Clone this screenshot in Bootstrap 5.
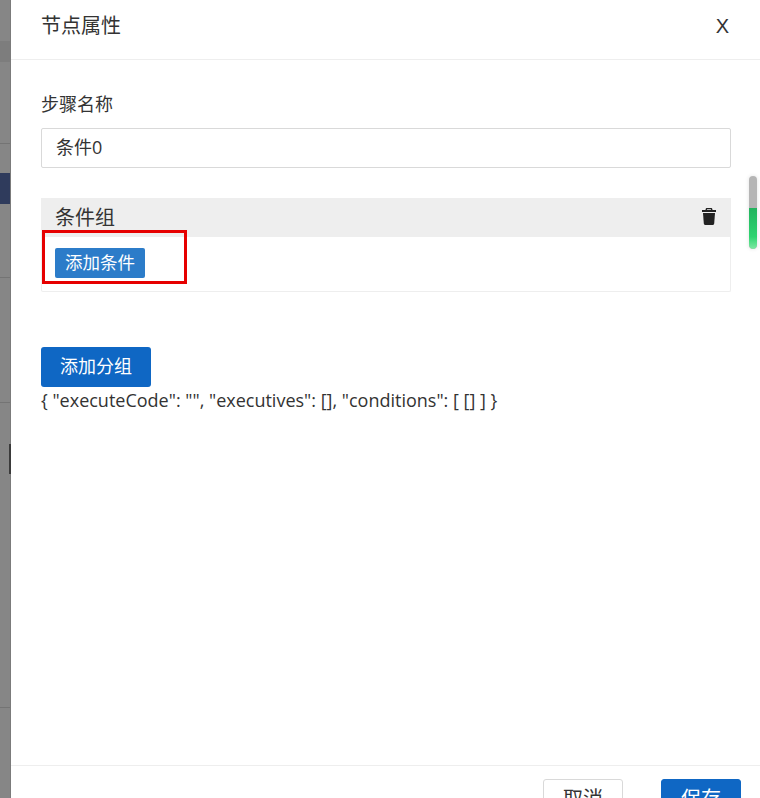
<!DOCTYPE html>
<html lang="zh">
<head>
<meta charset="utf-8">
<title>节点属性</title>
<link href="https://cdn.jsdelivr.net/npm/bootstrap@5.3.0/dist/css/bootstrap.min.css" rel="stylesheet">
<style>
html,body{height:798px;overflow:hidden;background:#fff}
body{font-family:"Open Sans","Noto Sans CJK SC",sans-serif;font-size:18px;color:#333}
.dim-strip{width:11px;flex:none;height:798px;background:#868686;border-right:1px solid #7b7b7b}
.dim-band{height:21px;margin-top:41px;background:#7d7d7d}
.dim-line{height:1px;background:#747474}
.dim-navy{height:31px;background:#2f3b5c}
.dim-edge{position:absolute;right:-1px;top:444px;width:2px;height:30px;background:#3a3a3a}
.panel-main{flex:1 1 auto;min-width:0;height:798px;position:relative}
.panel-head{flex:none;height:60px;padding:0 30px 8px;border-bottom:1px solid #eee}
.panel-title{font-size:20px;line-height:1;color:#333;margin:0;font-weight:400}
.panel-close{font-size:20px;line-height:1;color:#333;padding:0;background:none;border:0;margin-right:1px;font-family:"Liberation Sans",sans-serif}
.panel-body{flex:none;height:705px;padding:33px 29px 0 30px}
.step-label{font-size:18px;line-height:22px;margin:0 0 13px;color:#333;display:block}
.step-input{height:40px;border-radius:2px;border:1px solid #d9d9d9;padding:0 14px 5px;font-size:18px;color:#333}
.group-box{margin-top:30px;border:1px solid #eee;border-top:0;border-radius:2px;height:94px;position:relative}
.group-top{height:39px;background:#eee;padding:0 15px 0 14px;margin:0 -1px}
.group-name{font-size:20px;line-height:1}
.mark-box{position:absolute;left:0;top:32px;width:145px;height:54px;border:3px solid #e60000;pointer-events:none}
.btn-cond{background:#2c7cc9;border:0;color:#fff;width:90px;height:30px;margin:11px 0 0 13px;padding:0 0 2px;font-size:17.5px;line-height:28px;border-radius:2px}
.btn-group-add{background:#0f67c4;border:0;color:#fff;width:110px;height:40px;margin-top:55px;padding:0 0 2px;font-size:18px;border-radius:3px;display:block}
.json-text{font-size:18px;line-height:26px;margin:0;color:#333}
.panel-foot{flex:none;border-top:1px solid #eee;padding:13px 19px 0 0;gap:38px}
.btn-cancel,.btn-save{flex:none;width:80px;height:40px;padding:0;font-size:20px;border-radius:3px}
.btn-cancel{background:#fff;border:1px solid #d9d9d9;color:#333}
.btn-save{background:#0f67c4;border:1px solid #0f67c4;color:#fff}
.trash-svg{width:14px;height:17px;fill:#222;display:block;margin-top:-2px}
.scroll-pill{position:absolute;left:738px;top:176px;width:8px;height:73px;border-radius:4px;overflow:hidden;background:#b5b5b5;box-shadow:0 0 4px rgba(0,0,0,.12)}
.scroll-fill{height:41px;margin-top:32px;background:linear-gradient(#22b35e,#2fd470 70%,#7fe8a3);border-radius:0 0 4px 4px}
</style>
</head>
<body class="d-flex">
<div class="dim-strip position-relative">
  <div class="dim-band"></div>
  <div class="dim-line" style="margin-top:81px"></div>
  <div class="dim-navy" style="margin-top:29px"></div>
  <div class="dim-line" style="margin-top:73px"></div>
  <div class="dim-line" style="margin-top:124px"></div>
  <div class="dim-line" style="margin-top:304px"></div>
  <div class="dim-edge"></div>
</div>
<main class="panel-main d-flex flex-column">
  <header class="panel-head d-flex align-items-center justify-content-between">
    <h5 class="panel-title">节点属性</h5>
    <button type="button" class="panel-close">X</button>
  </header>
  <section class="panel-body">
    <label class="step-label" for="stepName">步骤名称</label>
    <input id="stepName" class="form-control step-input" value="条件0">
    <div class="group-box">
      <div class="group-top d-flex align-items-center justify-content-between">
        <span class="group-name">条件组</span>
        <svg class="trash-svg" viewBox="0 0 14 17" aria-hidden="true"><path d="M5 0h4c.8 0 1.3.5 1.4 1.4L10.500 2H14v2H0V2h3.500l.1-.6C3.700.5 4.200 0 5 0zM5 2h4l-.1-.7H5.100z"/><path d="M1 5h12l-.8 10.500c-.1.900-.7 1.500-1.600 1.500H3.400c-.9 0-1.500-.6-1.600-1.500z"/></svg>
      </div>
      <button type="button" class="btn-cond">添加条件</button>
      <div class="mark-box"></div>
    </div>
    <button type="button" class="btn-group-add">添加分组</button>
    <p class="json-text">{ "executeCode": "", "executives": [], "conditions": [ [] ] }</p>
  </section>
  <footer class="panel-foot d-flex justify-content-end">
    <button type="button" class="btn-cancel">取消</button>
    <button type="button" class="btn-save">保存</button>
  </footer>
  <div class="scroll-pill"><div class="scroll-fill"></div></div>
</main>
</body>
</html>
